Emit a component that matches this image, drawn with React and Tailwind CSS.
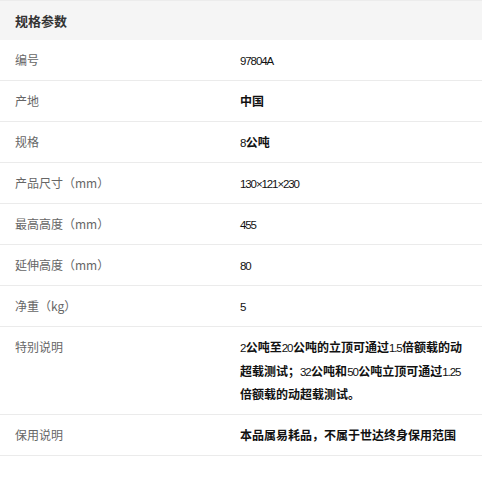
const rows = [
  { label: '编号', value: '97804A' },
  { label: '产地', value: '中国', bold: true },
  { label: '规格', value: '8公吨', bold: true },
  { label: '产品尺寸（mm）', value: '130×121×230' },
  { label: '最高高度（mm）', value: '455' },
  { label: '延伸高度（mm）', value: '80' },
  { label: '净重（kg）', value: '5' },
  {
    label: '特别说明',
    value: '2公吨至20公吨的立顶可通过1.5倍额载的动超载测试；32公吨和50公吨立顶可通过1.25倍额载的动超载测试。',
    bold: true,
  },
  { label: '保用说明', value: '本品属易耗品，不属于世达终身保用范围', bold: true },
];

// digits and latin letters are set in a narrow face, CJK stays in Noto
function Value({ text }) {
  const parts = text.split(/([0-9A-Za-z.×]+)/).filter(Boolean);
  return parts.map((p, i) =>
    /^[0-9A-Za-z.×]+$/.test(p) ? (
      <span
        key={i}
        className="font-[family-name:'Liberation_Sans',sans-serif] font-normal text-[11.5px] leading-none tracking-[-1.1px] pr-[0.5px]"
      >
        {p}
      </span>
    ) : (
      <span key={i}>{p}</span>
    )
  );
}

export default function App() {
  return (
    <div className="w-[482px] h-[482px] bg-white font-[family-name:'Noto_Sans_CJK_SC',sans-serif]">
      <div className="h-[40px] border-t border-[#ececec] bg-[#f5f5f5] flex items-center px-[15px]">
        <h3 className="text-[13px] font-bold text-[#333]">规格参数</h3>
      </div>
      {rows.map((r) => (
        <div key={r.label} className="flex items-start border-b border-[#ebebeb] py-2">
          <div className="w-[240px] shrink-0 pl-[15px] text-[12px] leading-[24px] text-[#666]">{r.label}</div>
          <div className={`w-[223px] text-[12px] leading-[23.5px] text-[#111] ${r.bold ? 'font-bold' : ''}`}>
            <Value text={r.value} />
          </div>
        </div>
      ))}
    </div>
  );
}
